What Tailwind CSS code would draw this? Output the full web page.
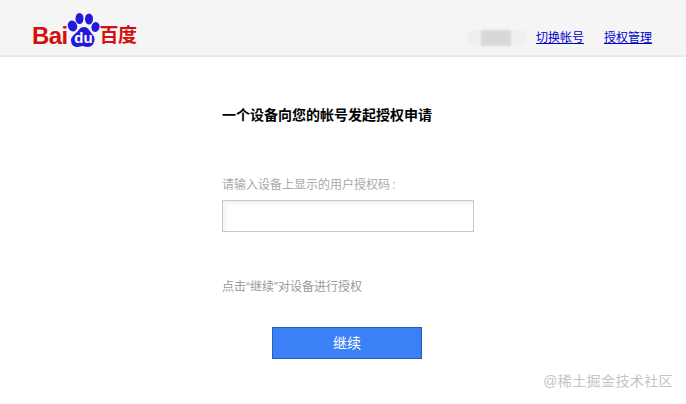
<!DOCTYPE html>
<html lang="zh-CN">
<head>
    <meta charset="UTF-8">
    <title>百度授权</title>
    <script src="https://cdn.jsdelivr.net/npm/@tailwindcss/browser@4"></script>
</head>
<body class="relative w-[686px] h-[404px] overflow-hidden bg-white font-['Liberation_Sans','Noto_Sans_CJK_SC',sans-serif]">
    <!-- header -->
    <header class="flex items-center justify-between h-[57px] pl-[32px] pr-[34px] bg-[#f5f5f5] border-b-2 border-[#e9e9e9]">
        <div class="flex items-end h-[36px] mt-[5px] text-[#d50f0f]">
            <span class="text-[24px] leading-[24px] font-bold tracking-[-0.6px] font-['Liberation_Sans',sans-serif]">Bai</span>
            <svg class="w-[33px] h-[36px] ml-[-1px]" viewBox="0 0 33 36">
                <ellipse cx="5.5" cy="14" rx="4.6" ry="5.6" transform="rotate(-20 5.5 14)" fill="#2319dc"/>
                <ellipse cx="12.5" cy="6.5" rx="4" ry="5.5" fill="#2319dc"/>
                <ellipse cx="22" cy="7" rx="4" ry="5.5" fill="#2319dc"/>
                <ellipse cx="28.5" cy="15" rx="4" ry="5" transform="rotate(15 28.5 15)" fill="#2319dc"/>
                <path d="M17 15c4 0 5 3 8 7 3 3 3 6 2 8-1 4-4 5-7 5-2 0-3-1-4-1-2 0-3 1-6 1-3 0-6-2-6-7 0-3 3-5 6-8 2-2 3-5 7-5z" fill="#2319dc"/>
                <text x="16.5" y="31" text-anchor="middle" font-size="15" font-weight="700" fill="#fff" font-family="Liberation Sans">du</text>
            </svg>
            <span class="text-[19px] leading-[24px] font-bold tracking-[-0.5px]">百度</span>
        </div>
        <div class="relative flex items-center gap-[20px] mt-[20px] text-[12px] text-[#0000cc]">
            <div class="absolute left-[-70px] top-[1px] w-[61px] h-[16px] bg-[#eeeeee] rounded-[8px] blur-[1px]">
                <div class="w-[30px] h-[16px] ml-[15px] bg-[#d8d8d8]"></div>
            </div>
            <a href="#" class="underline">切换帐号</a>
            <a href="#" class="underline">授权管理</a>
        </div>
    </header>

    <!-- content -->
    <main class="pl-[222px]">
        <h1 class="mt-[48px] text-[14px] leading-[20px] font-bold text-black">一个设备向您的帐号发起授权申请</h1>
        <p class="mt-[51px] text-[12px] leading-[18px] text-[#a8a8a8]">请输入设备上显示的用户授权码<span class="ml-[2px]">:</span></p>
        <input type="text" class="block mt-[6px] w-[252px] h-[32px] bg-white border border-[#c8c8c8] shadow-[inset_3px_3px_4px_rgba(0,0,0,0.05)]">
        <p class="mt-[46px] text-[12px] leading-[18px] text-[#9a9a9a]">点击“继续”对设备进行授权</p>
        <button class="block mt-[31px] ml-[50px] pt-[1px] w-[150px] h-[32px] bg-[#3b80f5] border border-[#2a5cb0] text-white text-[14px]">继续</button>
    </main>

    <!-- watermark -->
    <div class="absolute right-[13px] top-[371px] text-[14px] leading-[20px] text-[#c4c4c4] tracking-[0.4px]">@稀土掘金技术社区</div>
</body>
</html>
